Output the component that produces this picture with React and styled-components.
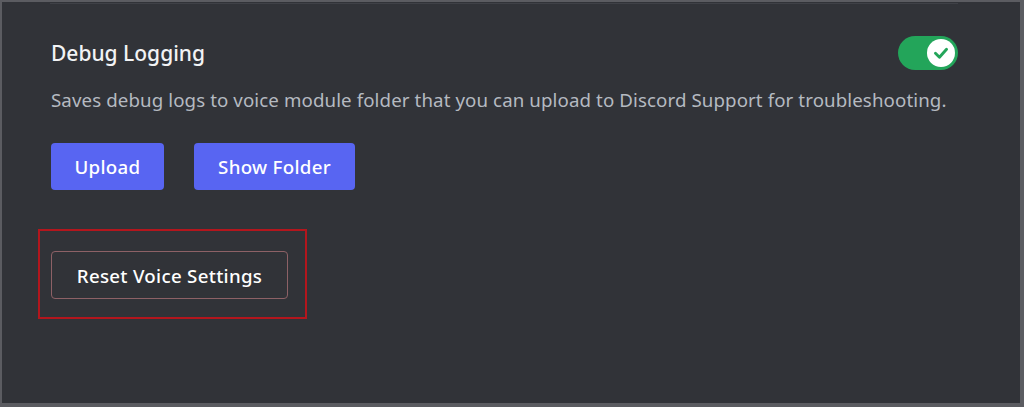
import React from 'react';
import styled, { createGlobalStyle } from 'styled-components';

const GlobalStyle = createGlobalStyle`
  html, body {
    margin: 0;
    padding: 0;
    background: #313338;
  }
  * {
    box-sizing: border-box;
  }
`;

const Frame = styled.div`
  width: 1024px;
  height: 407px;
  background: #313338;
  border-style: solid;
  border-color: #5b5c61;
  border-width: 2px 4px 4px 2px;
  padding: 1px 0 0 48px;
  font-family: "Noto Sans", "Open Sans", sans-serif;
  overflow: hidden;
`;

const Section = styled.section`
  width: 908px;
  border-top: 1px solid #3f4147;
  padding-top: 32px;
  display: flex;
  flex-direction: column;
`;

const TitleRow = styled.div`
  display: flex;
  align-items: center;
  justify-content: space-between;
  height: 34px;
  padding-left: 1px;
`;

const Title = styled.h3`
  margin: 0;
  font-size: 21px;
  line-height: 24px;
  font-weight: 500;
  color: #f2f3f5;
`;

const Toggle = styled.div`
  width: 60px;
  height: 34px;
  border-radius: 17px;
  background: #23a55a;
  display: flex;
  align-items: center;
  justify-content: flex-end;
  padding-right: 3px;
`;

const Knob = styled.div`
  width: 28px;
  height: 28px;
  border-radius: 50%;
  background: #ffffff;
  display: flex;
  align-items: center;
  justify-content: center;
`;

const Description = styled.p`
  margin: 19px 0 0 1px;
  font-size: 18.7px;
  letter-spacing: 0.1px;
  line-height: 22px;
  color: #b5bac1;
  white-space: nowrap;
`;

const ButtonRow = styled.div`
  display: flex;
  gap: 30px;
  margin-top: 32px;
  padding-left: 1px;
`;

const Button = styled.button`
  height: 47px;
  padding: 0;
  border-radius: 4px;
  border: ${(p) => (p.$outline ? '1px solid #8d6166' : 'none')};
  background: ${(p) => (p.$outline ? 'transparent' : '#5865f2')};
  color: #ffffff;
  font-family: inherit;
  font-size: 18.7px;
  letter-spacing: 0.3px;
  font-weight: 500;
  cursor: pointer;
`;

const Highlight = styled.div`
  align-self: flex-start;
  margin: 39px 0 0 -12px;
  width: 269px;
  height: 90px;
  border: 2px solid #b3161d;
  padding: 20px 0 0 11px;
`;

const Check = () => (
  <svg width="20" height="20" viewBox="0 0 18 18">
    <path
      d="M4 9.3 L7.6 12.8 L14 5.6"
      fill="none"
      stroke="#23a55a"
      strokeWidth="2.6"
      strokeLinecap="round"
      strokeLinejoin="round"
    />
  </svg>
);

export default function App() {
  return (
    <>
      <GlobalStyle />
      <Frame>
        <Section>
          <TitleRow>
            <Title>Debug Logging</Title>
            <Toggle>
              <Knob>
                <Check />
              </Knob>
            </Toggle>
          </TitleRow>
          <Description>
            Saves debug logs to voice module folder that you can upload to Discord Support for troubleshooting.
          </Description>
          <ButtonRow>
            <Button style={{ width: 113 }}>Upload</Button>
            <Button style={{ width: 161 }}>Show Folder</Button>
          </ButtonRow>
          <Highlight>
            <Button $outline style={{ width: 237, height: 48 }}>
              Reset Voice Settings
            </Button>
          </Highlight>
        </Section>
      </Frame>
    </>
  );
}
